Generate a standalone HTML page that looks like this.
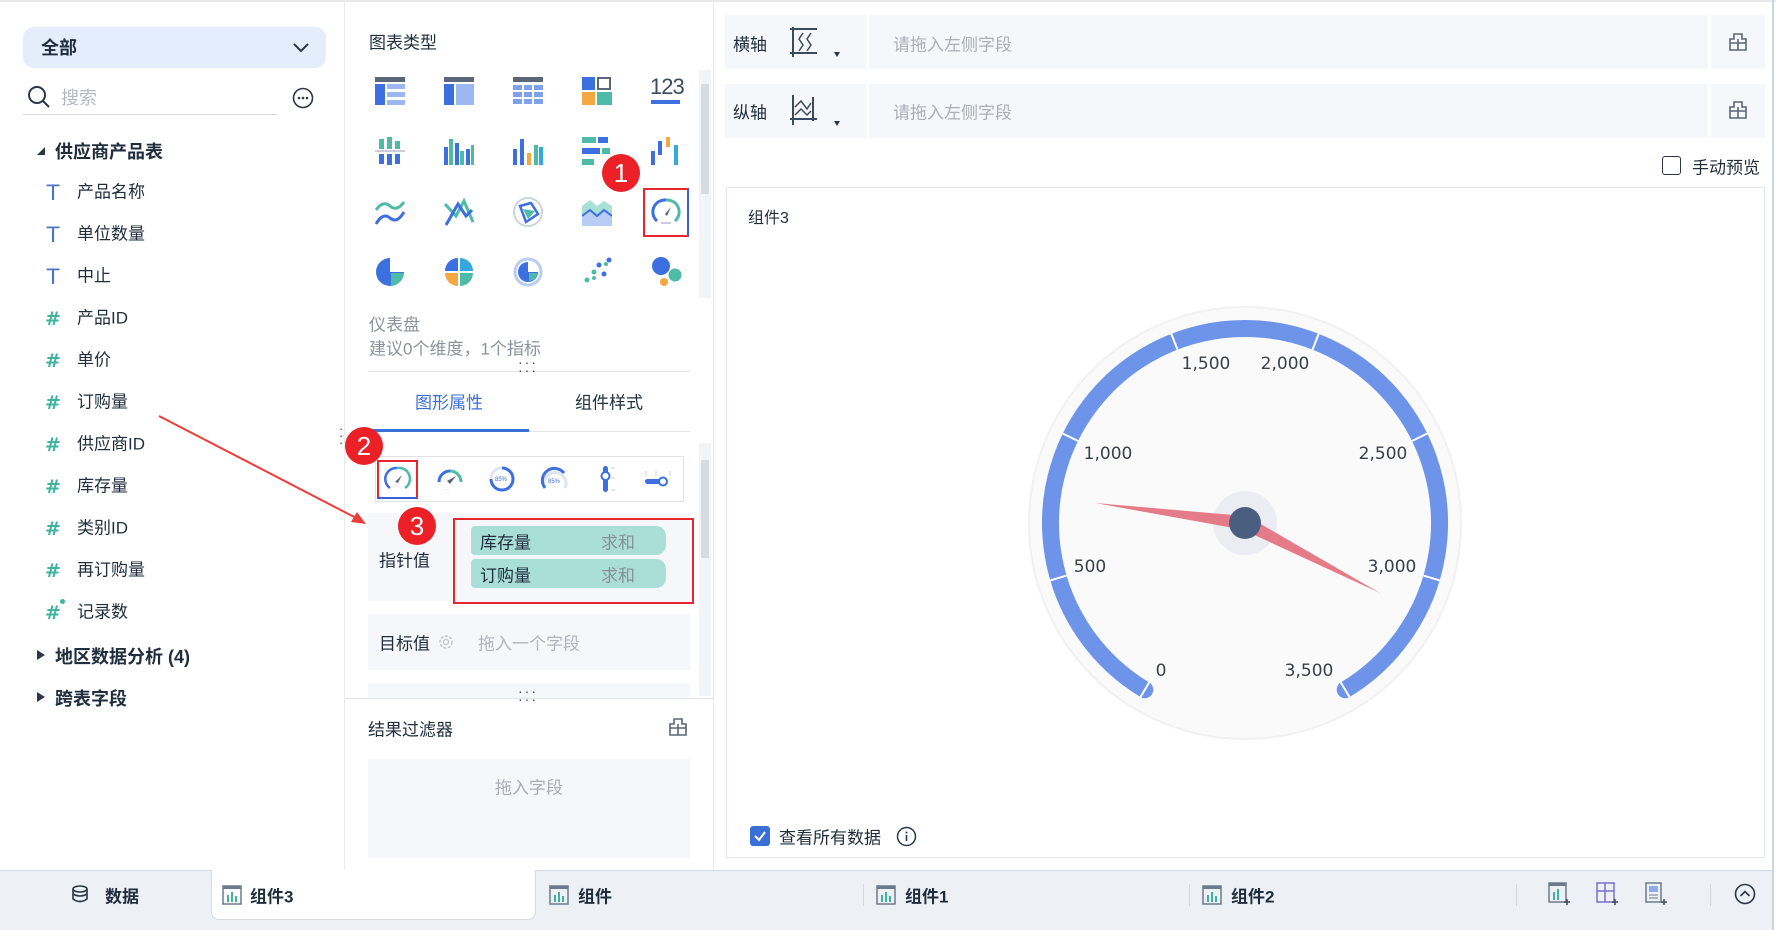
<!DOCTYPE html>
<html><head><meta charset="utf-8">
<style>
*{margin:0;padding:0;box-sizing:border-box}
body{width:1776px;height:930px;background:#fff;font-family:"Liberation Sans","Noto Sans CJK SC",sans-serif;color:#1f2d3d;position:relative;overflow:hidden;font-size:17px}
.a{position:absolute;white-space:nowrap}
.t{transform:translateY(-50%)}
.ti{color:#4d74c4;font-size:21px;font-weight:400;width:20px;text-align:center;margin-top:3px;font-family:"DejaVu Sans",sans-serif}
.hs{color:#3fb39f;font-size:19px;font-weight:700;width:20px;text-align:center;margin-top:3px;font-family:"DejaVu Sans",sans-serif}
.badge{position:absolute;width:38px;height:38px;border-radius:50%;background:#ec2027;color:#fff;font-size:26px;text-align:center;line-height:38px;font-weight:400}
.rbox{position:absolute;border:2px solid #e8262d}
.row{position:absolute;background:#f5f7fb}
.pill{position:absolute;left:471px;width:195px;height:29px;background:#aadfd7;border-radius:4px 10px 10px 4px}
.pill span{position:absolute;top:50%;transform:translateY(-50%)}
.gray{color:#9aa1ab}
.sep{position:absolute;width:1px;background:#d3d7de}
</style></head><body>
<div class="a" style="left:0;top:0;width:1776px;height:2px;background:#e8e9ec"></div>
<div class="a" style="left:1772px;top:0;width:2px;height:930px;background:#cfd3da"></div>
<div class="a" style="left:344px;top:2px;width:1px;height:868px;background:#e8eaee"></div>
<div class="a" style="left:713px;top:2px;width:1px;height:868px;background:#e8eaee"></div>

<div class="a" style="left:23px;top:27px;width:303px;height:41px;background:#e4edfc;border-radius:11px"></div>
<div class="a t" style="left:41px;top:47px;font-weight:700;font-size:18px">全部</div>
<svg class="a" style="left:292px;top:38px" width="18" height="18"><path d="M2 6 L9 13 L16 6" fill="none" stroke="#2b3648" stroke-width="2"/></svg>
<svg class="a" style="left:27px;top:85px" width="24" height="24"><circle cx="10" cy="10" r="8" fill="none" stroke="#2b3648" stroke-width="2"/><path d="M16 16 L22 22" stroke="#2b3648" stroke-width="2"/></svg>
<div class="a t gray" style="left:61px;top:97px;font-size:18px;color:#b5bac2">搜索</div>
<div class="a" style="left:23px;top:114px;width:254px;height:1px;background:#d6d9de"></div>
<svg class="a" style="left:292px;top:87px" width="22" height="22"><circle cx="11" cy="11" r="9.5" fill="none" stroke="#2b3648" stroke-width="1.6"/><circle cx="7" cy="11" r="1.3" fill="#2b3648"/><circle cx="11" cy="11" r="1.3" fill="#2b3648"/><circle cx="15" cy="11" r="1.3" fill="#2b3648"/></svg>

<svg class="a" style="left:36px;top:146px" width="10" height="10"><path d="M1 9 L9 9 L9 1Z" fill="#2b3648"/></svg>
<div class="a t" style="left:55px;top:151px;font-weight:700;font-size:18px">供应商产品表</div>

<div class="a t ti" style="left:43px;top:190px">T</div><div class="a t" style="left:77px;top:190px">产品名称</div>
<div class="a t ti" style="left:43px;top:232px">T</div><div class="a t" style="left:77px;top:232px">单位数量</div>
<div class="a t ti" style="left:43px;top:274px">T</div><div class="a t" style="left:77px;top:274px">中止</div>
<div class="a t hs" style="left:43px;top:316px">#</div><div class="a t" style="left:77px;top:316px">产品ID</div>
<div class="a t hs" style="left:43px;top:358px">#</div><div class="a t" style="left:77px;top:358px">单价</div>
<div class="a t hs" style="left:43px;top:400px">#</div><div class="a t" style="left:77px;top:400px">订购量</div>
<div class="a t hs" style="left:43px;top:442px">#</div><div class="a t" style="left:77px;top:442px">供应商ID</div>
<div class="a t hs" style="left:43px;top:484px">#</div><div class="a t" style="left:77px;top:484px">库存量</div>
<div class="a t hs" style="left:43px;top:526px">#</div><div class="a t" style="left:77px;top:526px">类别ID</div>
<div class="a t hs" style="left:43px;top:568px">#</div><div class="a t" style="left:77px;top:568px">再订购量</div>
<div class="a t hs" style="left:43px;top:610px">#</div><div class="a" style="left:60px;top:599px;width:5px;height:5px;border-radius:50%;background:#3fb39f"></div><div class="a t" style="left:77px;top:610px">记录数</div>

<svg class="a" style="left:36px;top:649px" width="10" height="12"><path d="M1 1 L9 6 L1 11Z" fill="#2b3648"/></svg>
<div class="a t" style="left:55px;top:656px;font-weight:700;font-size:18px">地区数据分析 (4)</div>
<svg class="a" style="left:36px;top:691px" width="10" height="12"><path d="M1 1 L9 6 L1 11Z" fill="#2b3648"/></svg>
<div class="a t" style="left:55px;top:698px;font-weight:700;font-size:18px">跨表字段</div>

<div class="a t" style="left:369px;top:41px">图表类型</div>
<div class="a" style="left:699px;top:70px;width:12px;height:228px;background:#f3f4f6"></div>
<div class="a" style="left:701px;top:84px;width:8px;height:110px;background:#d8dbe0"></div>

<svg class="a" style="left:375px;top:77px" width="30" height="28"><rect x="0" y="0" width="30" height="5" fill="#5b6679"/><rect x="0" y="7" width="10" height="21" fill="#3c6fe0"/><rect x="12" y="7" width="18" height="5" fill="#9db7f2"/><rect x="12" y="15" width="18" height="5" fill="#9db7f2"/><rect x="12" y="23" width="18" height="5" fill="#9db7f2"/></svg>
<svg class="a" style="left:444px;top:77px" width="30" height="28"><rect x="0" y="0" width="30" height="5" fill="#5b6679"/><rect x="0" y="7" width="10" height="21" fill="#3c6fe0"/><rect x="12" y="7" width="18" height="21" fill="#9db7f2"/></svg>
<svg class="a" style="left:513px;top:77px" width="30" height="28"><rect x="0" y="0" width="30" height="5" fill="#5b6679"/><g fill="#7fa2ee"><rect x="0" y="8" width="9" height="5"/><rect x="11" y="8" width="8" height="5"/><rect x="21" y="8" width="9" height="5"/><rect x="0" y="15" width="9" height="5"/><rect x="11" y="15" width="8" height="5"/><rect x="21" y="15" width="9" height="5"/><rect x="0" y="22" width="9" height="5"/><rect x="11" y="22" width="8" height="5"/><rect x="21" y="22" width="9" height="5"/></g></svg>
<svg class="a" style="left:582px;top:77px" width="30" height="28"><rect x="0" y="0" width="13" height="13" fill="#3c6fe0"/><rect x="16" y="1" width="12" height="11" fill="none" stroke="#5b6679" stroke-width="2"/><rect x="0" y="15" width="13" height="13" fill="#f5a742"/><rect x="15" y="15" width="15" height="13" fill="#4dbba8"/></svg>
<div class="a" style="left:650px;top:74px;font-size:22px;color:#3c4a60;letter-spacing:-1px">123</div>
<div class="a" style="left:651px;top:100px;width:29px;height:4px;background:#3c6fe0"></div>
<svg class="a" style="left:375px;top:137px" width="30" height="28"><g fill="#4dbba8"><rect x="4" y="2" width="5" height="10"/><rect x="12" y="0" width="5" height="12"/><rect x="20" y="4" width="5" height="8"/></g><rect x="0" y="13" width="30" height="2" fill="#ccd"/><g fill="#3c6fe0"><rect x="4" y="17" width="5" height="10"/><rect x="12" y="17" width="5" height="11"/><rect x="20" y="17" width="5" height="10"/></g></svg>
<svg class="a" style="left:444px;top:137px" width="30" height="28"><g fill="#3c6fe0"><rect x="0" y="10" width="4" height="18"/><rect x="11" y="6" width="4" height="22"/><rect x="22" y="12" width="4" height="16"/></g><g fill="#4dbba8"><rect x="5" y="2" width="4" height="26"/><rect x="16" y="14" width="4" height="14"/><rect x="27" y="8" width="3" height="20"/></g></svg>
<svg class="a" style="left:513px;top:137px" width="30" height="28"><rect x="0" y="12" width="4" height="16" fill="#3c6fe0"/><rect x="7" y="2" width="4" height="26" fill="#3c6fe0"/><rect x="14" y="16" width="4" height="12" fill="#f5a742"/><rect x="21" y="8" width="4" height="20" fill="#4dbba8"/><rect x="26" y="10" width="4" height="18" fill="#36a8e0"/></svg>
<svg class="a" style="left:582px;top:137px" width="30" height="28"><rect x="0" y="0" width="14" height="6" fill="#4dbba8"/><rect x="16" y="0" width="10" height="6" fill="#3c6fe0"/><rect x="0" y="11" width="18" height="6" fill="#3c6fe0"/><rect x="20" y="11" width="8" height="6" fill="#4dbba8"/><rect x="0" y="22" width="12" height="6" fill="#4dbba8"/></svg>
<svg class="a" style="left:651px;top:137px" width="30" height="28"><rect x="0" y="14" width="4" height="14" fill="#3c6fe0"/><rect x="7" y="4" width="4" height="14" fill="#3c6fe0"/><rect x="15" y="0" width="4" height="10" fill="#f5a742"/><rect x="23" y="8" width="4" height="20" fill="#36a8e0"/></svg>
<svg class="a" style="left:375px;top:198px" width="30" height="28"><path d="M1 12 Q8 2 15 8 T29 4" fill="none" stroke="#4dbba8" stroke-width="3"/><path d="M1 26 Q8 14 15 20 T29 14" fill="none" stroke="#3c6fe0" stroke-width="3"/></svg>
<svg class="a" style="left:444px;top:198px" width="30" height="28"><path d="M1 6 L12 18 L20 3 L29 24" fill="none" stroke="#4dbba8" stroke-width="3"/><path d="M2 27 L14 6 L22 18 L28 12" fill="none" stroke="#3c6fe0" stroke-width="3"/></svg>
<svg class="a" style="left:513px;top:197px" width="30" height="30"><circle cx="15" cy="15" r="14" fill="none" stroke="#ccd3df" stroke-width="2"/><path d="M7 9 L18 6 L25 17 L13 25Z" fill="none" stroke="#3c6fe0" stroke-width="2.5"/><path d="M10 12 L22 14 L15 22Z" fill="#4dbba8"/></svg>
<svg class="a" style="left:582px;top:198px" width="30" height="28"><path d="M0 8 L8 2 L15 8 L22 3 L30 8 L30 28 L0 28Z" fill="#a8e0d6"/><path d="M0 18 L8 12 L15 18 L22 12 L30 18 L30 28 L0 28Z" fill="#b8ccf5"/><path d="M0 18 L8 12 L15 18 L22 12 L30 18" fill="none" stroke="#3c6fe0" stroke-width="2"/></svg>
<svg class="a" style="left:650px;top:196px" width="32" height="32"><path d="M7 25 A12 12 0 0 1 16 4" fill="none" stroke="#3c6fe0" stroke-width="3"/><path d="M16 4 A12 12 0 0 1 25 25" fill="none" stroke="#4dbba8" stroke-width="3"/><path d="M15 18 L21 11 L17 20Z" fill="#5b6679"/><rect x="11" y="26" width="10" height="2" fill="#ccd"/></svg>
<svg class="a" style="left:375px;top:257px" width="30" height="30"><path d="M15 15 L15 1 A14 14 0 1 0 29 15Z" fill="#3c6fe0"/><path d="M16 16 L29 16 A14 14 0 0 1 16 29Z" fill="#4dbba8"/></svg>
<svg class="a" style="left:444px;top:257px" width="30" height="30"><path d="M14 14 L14 1 A13 13 0 0 0 1 14Z" fill="#3c6fe0"/><path d="M16 14 L16 1 A13 13 0 0 1 29 14Z" fill="#36a8e0"/><path d="M14 16 L1 16 A13 13 0 0 0 14 29Z" fill="#f5a742"/><path d="M16 16 L29 16 A13 13 0 0 1 16 29Z" fill="#4dbba8"/></svg>
<svg class="a" style="left:513px;top:257px" width="30" height="30"><circle cx="15" cy="15" r="13" fill="none" stroke="#b8ccf5" stroke-width="3"/><path d="M15 15 L15 5 A10 10 0 1 0 25 15Z" fill="#3c6fe0"/><path d="M16 16 L24 16 A8 8 0 0 1 16 24Z" fill="#4dbba8"/></svg>
<svg class="a" style="left:582px;top:257px" width="30" height="30"><g fill="#3c6fe0"><circle cx="27" cy="3" r="2.5"/><circle cx="17" cy="8" r="2.5"/><circle cx="22" cy="17" r="2.5"/></g><g fill="#4dbba8"><circle cx="24" cy="7" r="2"/><circle cx="12" cy="15" r="2.5"/><circle cx="5" cy="23" r="2.5"/><circle cx="12" cy="21" r="2"/></g></svg>
<svg class="a" style="left:650px;top:256px" width="32" height="32"><circle cx="11" cy="10" r="9" fill="#3c6fe0"/><circle cx="25" cy="19" r="6.5" fill="#4dbba8"/><circle cx="14" cy="26" r="4" fill="#f5a742"/></svg>

<div class="rbox" style="left:643px;top:188px;width:46px;height:49px;border-right-color:#3a5fd8"></div>
<div class="badge" style="left:602px;top:154px">1</div>

<div class="a t" style="left:369px;top:323px;color:#8c929b">仪表盘</div>
<div class="a t" style="left:369px;top:347px;color:#8c929b">建议0个维度，1个指标</div>
<div class="a" style="left:368px;top:371px;width:322px;height:1px;background:#e3e5ea"></div>
<div class="a" style="left:518px;top:358px;font-size:14px;letter-spacing:2px;color:#444;line-height:8px">···<br>···</div>

<div class="a t" style="left:449px;top:401px;transform:translate(-50%,-50%);color:#3a6fd8">图形属性</div>
<div class="a t" style="left:609px;top:401px;transform:translate(-50%,-50%)">组件样式</div>
<div class="a" style="left:368px;top:431px;width:322px;height:1px;background:#e3e5ea"></div>
<div class="a" style="left:368px;top:429px;width:161px;height:3px;background:#3a6fd8"></div>
<div class="a" style="left:339px;top:425px;font-size:13px;line-height:7px;color:#444">·<br>·<br>·</div>

<div class="a" style="left:699px;top:443px;width:12px;height:253px;background:#f3f4f6"></div>
<div class="a" style="left:701px;top:460px;width:8px;height:98px;background:#d8dbe0"></div>
<div class="a" style="left:375px;top:456px;width:309px;height:46px;border:1px solid #dfe2e8"></div>
<svg class="a" style="left:382px;top:464px" width="30" height="30"><path d="M8 24 A11 11 0 0 1 15 4" fill="none" stroke="#3c6fe0" stroke-width="2.5"/><path d="M15 4 A11 11 0 0 1 23 24" fill="none" stroke="#4dbba8" stroke-width="2.5"/><path d="M13 18 L20 11 L16 19Z" fill="#5b6679"/></svg>
<svg class="a" style="left:435px;top:466px" width="30" height="26"><path d="M4 16 A11 11 0 0 1 15 5" fill="none" stroke="#3c6fe0" stroke-width="3"/><path d="M15 5 A11 11 0 0 1 26 16" fill="none" stroke="#4dbba8" stroke-width="3"/><path d="M12 15 L21 10 L15 18Z" fill="#5b6679"/><text x="9" y="25" font-size="5" fill="#aaa">···</text></svg>
<svg class="a" style="left:487px;top:464px" width="30" height="30"><circle cx="15" cy="15" r="11" fill="none" stroke="#dfe5f3" stroke-width="3"/><path d="M15 4 A11 11 0 1 1 4 15" fill="none" stroke="#3c6fe0" stroke-width="3"/><text x="8" y="17" font-size="6" fill="#3c6fe0">85%</text></svg>
<svg class="a" style="left:540px;top:464px" width="30" height="30"><path d="M5 24 A11 11 0 1 1 25 24" fill="none" stroke="#dfe5f3" stroke-width="3"/><path d="M5 24 A11 11 0 0 1 24 9" fill="none" stroke="#3c6fe0" stroke-width="3"/><text x="8" y="19" font-size="6" fill="#3c6fe0">85%</text></svg>
<svg class="a" style="left:597px;top:464px" width="22" height="30"><rect x="6" y="2" width="5" height="26" rx="2.5" fill="#3c6fe0"/><circle cx="8.5" cy="12" r="4" fill="#fff" stroke="#3c6fe0" stroke-width="2"/><g stroke="#ccc"><line x1="14" y1="4" x2="18" y2="4"/><line x1="14" y1="14" x2="18" y2="14"/><line x1="14" y1="26" x2="18" y2="26"/></g></svg>
<svg class="a" style="left:643px;top:468px" width="30" height="22"><g stroke="#ccc"><line x1="3" y1="3" x2="3" y2="8"/><line x1="13" y1="3" x2="13" y2="8"/><line x1="27" y1="3" x2="27" y2="8"/></g><rect x="2" y="11" width="22" height="5" rx="2.5" fill="#3c6fe0"/><circle cx="20" cy="13.5" r="4" fill="#fff" stroke="#3c6fe0" stroke-width="2"/></svg>
<div class="rbox" style="left:377px;top:460px;width:41px;height:39px;border-bottom-color:#3a5fd8"></div>
<div class="badge" style="left:345px;top:427px">2</div>

<div class="row" style="left:368px;top:513px;width:322px;height:88px"></div>
<div class="a t" style="left:379px;top:559px">指针值</div>
<div class="pill" style="top:526px"><span style="left:9px">库存量</span><span class="gray" style="left:130px;color:#8a9098">求和</span></div>
<div class="pill" style="top:559px"><span style="left:9px">订购量</span><span class="gray" style="left:130px;color:#8a9098">求和</span></div>
<div class="rbox" style="left:453px;top:518px;width:241px;height:86px"></div>
<div class="badge" style="left:398px;top:507px">3</div>

<div class="row" style="left:368px;top:614px;width:322px;height:56px"></div>
<div class="a t" style="left:379px;top:642px">目标值</div>
<svg class="a" style="left:438px;top:634px" width="16" height="16"><circle cx="8" cy="8" r="6" fill="none" stroke="#c0c5cc" stroke-width="1.5" stroke-dasharray="3 1.5"/><circle cx="8" cy="8" r="2.5" fill="none" stroke="#c0c5cc" stroke-width="1.2"/></svg>
<div class="a t" style="left:478px;top:642px;color:#b0b5bd">拖入一个字段</div>
<div class="row" style="left:368px;top:683px;width:322px;height:15px"></div>
<div class="a" style="left:345px;top:698px;width:368px;height:1px;background:#e3e5ea"></div>
<div class="a" style="left:518px;top:687px;font-size:14px;letter-spacing:2px;color:#444;line-height:8px">···<br>···</div>

<div class="a t" style="left:368px;top:728px">结果过滤器</div>
<svg class="a" style="left:668px;top:717px" width="20" height="20"><path d="M6 2 H14 V7 H18 V18 H2 V7 H6Z M2 11 H18 M10 7 V18" fill="none" stroke="#5b6679" stroke-width="1.6"/></svg>
<div class="row" style="left:368px;top:759px;width:322px;height:99px"></div>
<div class="a t" style="left:529px;top:786px;transform:translate(-50%,-50%);color:#a8aeb6">拖入字段</div>

<div class="row" style="left:725px;top:15px;width:1040px;height:54px"></div>
<div class="a" style="left:866px;top:15px;width:3px;height:54px;background:#fff"></div>
<div class="a" style="left:1708px;top:15px;width:3px;height:54px;background:#fff"></div>
<div class="a t" style="left:733px;top:43px">横轴</div>
<svg class="a" style="left:789px;top:27px" width="32" height="30"><line x1="1" y1="2" x2="28" y2="2" stroke="#3c4a60" stroke-width="2"/><line x1="1" y1="26" x2="28" y2="26" stroke="#3c4a60" stroke-width="2"/><line x1="4" y1="0" x2="4" y2="30" stroke="#3c4a60" stroke-width="2"/><path d="M14 6 L10 12 L14 18 L10 24 M22 6 L18 12 L22 18 L18 24" fill="none" stroke="#3c4a60" stroke-width="1.5"/></svg>
<div class="a" style="left:834px;top:52px;border:3px solid transparent;border-top:5px solid #2b3648"></div>
<div class="a t" style="left:893px;top:43px;color:#aab0b8">请拖入左侧字段</div>
<svg class="a" style="left:1728px;top:32px" width="20" height="20"><path d="M6 2 H14 V7 H18 V18 H2 V7 H6Z M2 11 H18 M10 7 V18" fill="none" stroke="#5b6679" stroke-width="1.6"/></svg>

<div class="row" style="left:725px;top:84px;width:1040px;height:54px"></div>
<div class="a" style="left:866px;top:84px;width:3px;height:54px;background:#fff"></div>
<div class="a" style="left:1708px;top:84px;width:3px;height:54px;background:#fff"></div>
<div class="a t" style="left:733px;top:111px">纵轴</div>
<svg class="a" style="left:789px;top:95px" width="32" height="30"><line x1="1" y1="24" x2="28" y2="24" stroke="#3c4a60" stroke-width="2"/><line x1="4" y1="0" x2="4" y2="30" stroke="#3c4a60" stroke-width="2"/><line x1="24" y1="2" x2="24" y2="26" stroke="#3c4a60" stroke-width="2"/><path d="M6 12 L12 6 L18 14 L22 8 M6 20 L12 14 L18 20 L22 16" fill="none" stroke="#3c4a60" stroke-width="1.5"/></svg>
<div class="a" style="left:834px;top:121px;border:3px solid transparent;border-top:5px solid #2b3648"></div>
<div class="a t" style="left:893px;top:111px;color:#aab0b8">请拖入左侧字段</div>
<svg class="a" style="left:1728px;top:100px" width="20" height="20"><path d="M6 2 H14 V7 H18 V18 H2 V7 H6Z M2 11 H18 M10 7 V18" fill="none" stroke="#5b6679" stroke-width="1.6"/></svg>

<div class="a" style="left:1662px;top:156px;width:19px;height:19px;border:1.5px solid #2b3648;border-radius:3px"></div>
<div class="a t" style="left:1692px;top:166px">手动预览</div>

<div class="a" style="left:726px;top:187px;width:1039px;height:671px;border:1.5px solid #e4e7ec"></div>
<div class="a t" style="left:748px;top:216px;font-size:16px">组件3</div>

<svg class="a" style="left:0;top:0" width="1776" height="930">
<circle cx="1245" cy="523" r="216" fill="#fafafa" stroke="#f1f1f3" stroke-width="2"/>
<path d="M1144.8 689.7 A194.5 194.5 0 1 1 1345.2 689.7" fill="none" stroke="#6e94ea" stroke-width="17" stroke-linecap="round"/>
<g stroke="#fff" stroke-width="2">
<line x1="1149.2" y1="682.4" x2="1140.5" y2="697"/><line x1="1066.6" y1="575.6" x2="1050.3" y2="580.4"/><line x1="1078" y1="441" x2="1062.7" y2="433.5"/><line x1="1177.5" y1="349.6" x2="1171.3" y2="333.8"/><line x1="1312.5" y1="349.6" x2="1318.7" y2="333.8"/><line x1="1412" y1="441" x2="1427.3" y2="433.5"/><line x1="1423.4" y1="575.6" x2="1439.7" y2="580.4"/><line x1="1340.8" y1="682.4" x2="1349.5" y2="697"/>
</g>
<g font-family="DejaVu Sans, Liberation Sans, sans-serif" font-size="17" fill="#3a3f4a" text-anchor="middle">
<text x="1206" y="369">1,500</text><text x="1285" y="369">2,000</text>
<text x="1108" y="459">1,000</text><text x="1383" y="459">2,500</text>
<text x="1090" y="572">500</text><text x="1392" y="572">3,000</text>
<text x="1161" y="676">0</text><text x="1309" y="676">3,500</text>
</g>
<circle cx="1245" cy="523" r="32" fill="#ecedf3"/>
<polygon points="1095,503 1245.9,516.1 1244.1,529.9" fill="#e57b88"/>
<polygon points="1380,593 1241.8,529.2 1248.2,516.8" fill="#e57b88"/>
<circle cx="1245" cy="523" r="16" fill="#4a5e80"/>
<line x1="159" y1="416" x2="360" y2="520" stroke="#ef3b3b" stroke-width="2"/>
<polygon points="366,524 351,522 357,512" fill="#ef3b3b"/>
</svg>

<div class="a" style="left:750px;top:826px;width:20px;height:20px;background:#3a6fd8;border-radius:3px"></div>
<svg class="a" style="left:752px;top:828px" width="16" height="16"><path d="M3 8 L7 12 L13 4" fill="none" stroke="#fff" stroke-width="2"/></svg>
<div class="a t" style="left:779px;top:836px">查看所有数据</div>
<svg class="a" style="left:896px;top:826px" width="21" height="21"><circle cx="10.5" cy="10.5" r="9" fill="none" stroke="#2b3648" stroke-width="1.5"/><rect x="9.7" y="9" width="1.6" height="6" fill="#2b3648"/><circle cx="10.5" cy="6.5" r="1" fill="#2b3648"/></svg>

<div class="a" style="left:0;top:870px;width:1772px;height:60px;background:#edf0f5;border-top:1px solid #d3d7de"></div>
<div class="a" style="left:211px;top:870px;width:325px;height:50px;background:#fff;border:1px solid #d6dae0;border-top:none;border-radius:0 0 8px 8px"></div>
<svg class="a" style="left:70px;top:884px" width="20" height="20"><ellipse cx="10" cy="5" rx="7" ry="3" fill="none" stroke="#2b3648" stroke-width="1.6"/><path d="M3 5 V15 Q10 20 17 15 V5 M3 10 Q10 14 17 10" fill="none" stroke="#2b3648" stroke-width="1.6"/></svg>
<div class="a t" style="left:105px;top:895px;font-weight:700">数据</div>
<svg class="a" style="left:222px;top:885px" width="20" height="20"><rect x="1" y="1" width="18" height="18" fill="none" stroke="#6b7a8c" stroke-width="1.5"/><rect x="1" y="1" width="18" height="3" fill="#6b7a8c"/><g fill="#3fb39f"><rect x="5" y="10" width="2" height="7"/><rect x="9" y="7" width="2" height="10"/><rect x="13" y="11" width="2" height="6"/></g></svg>
<div class="a t" style="left:250px;top:895px;font-weight:700">组件3</div>
<svg class="a" style="left:549px;top:885px" width="20" height="20"><rect x="1" y="1" width="18" height="18" fill="none" stroke="#6b7a8c" stroke-width="1.5"/><rect x="1" y="1" width="18" height="3" fill="#6b7a8c"/><g fill="#3fb39f"><rect x="5" y="10" width="2" height="7"/><rect x="9" y="7" width="2" height="10"/><rect x="13" y="11" width="2" height="6"/></g></svg>
<div class="a t" style="left:578px;top:895px;font-weight:700">组件</div>
<div class="sep" style="left:863px;top:884px;height:22px"></div>
<svg class="a" style="left:876px;top:885px" width="20" height="20"><rect x="1" y="1" width="18" height="18" fill="none" stroke="#6b7a8c" stroke-width="1.5"/><rect x="1" y="1" width="18" height="3" fill="#6b7a8c"/><g fill="#3fb39f"><rect x="5" y="10" width="2" height="7"/><rect x="9" y="7" width="2" height="10"/><rect x="13" y="11" width="2" height="6"/></g></svg>
<div class="a t" style="left:905px;top:895px;font-weight:700">组件1</div>
<div class="sep" style="left:1189px;top:884px;height:22px"></div>
<svg class="a" style="left:1202px;top:885px" width="20" height="20"><rect x="1" y="1" width="18" height="18" fill="none" stroke="#6b7a8c" stroke-width="1.5"/><rect x="1" y="1" width="18" height="3" fill="#6b7a8c"/><g fill="#3fb39f"><rect x="5" y="10" width="2" height="7"/><rect x="9" y="7" width="2" height="10"/><rect x="13" y="11" width="2" height="6"/></g></svg>
<div class="a t" style="left:1231px;top:895px;font-weight:700">组件2</div>
<div class="sep" style="left:1516px;top:884px;height:22px"></div>
<svg class="a" style="left:1548px;top:882px" width="24" height="24"><rect x="1" y="1" width="17" height="19" fill="none" stroke="#6b7a8c" stroke-width="1.5"/><rect x="1" y="1" width="17" height="3" fill="#6b7a8c"/><g fill="#3fb39f"><rect x="5" y="10" width="2" height="8"/><rect x="9" y="7" width="2" height="11"/></g><path d="M19 17 V23 M16 20 H22" stroke="#3c4a60" stroke-width="1.5"/></svg>
<svg class="a" style="left:1596px;top:882px" width="24" height="24"><rect x="1" y="1" width="17" height="19" fill="none" stroke="#7d6fd1" stroke-width="1.5"/><path d="M1 9 H18 M9 1 V20" stroke="#7d6fd1" stroke-width="1.5"/><path d="M19 17 V23 M16 20 H22" stroke="#3c4a60" stroke-width="1.5"/></svg>
<svg class="a" style="left:1645px;top:882px" width="24" height="24"><rect x="1" y="1" width="15" height="19" fill="none" stroke="#6b7a8c" stroke-width="1.5"/><rect x="4" y="4" width="9" height="6" fill="#8faaf0"/><path d="M4 13 H13 M4 16 H13" stroke="#6b7a8c"/><path d="M19 17 V23 M16 20 H22" stroke="#3c4a60" stroke-width="1.5"/></svg>
<div class="sep" style="left:1710px;top:884px;height:22px"></div>
<svg class="a" style="left:1734px;top:883px" width="22" height="22"><circle cx="11" cy="11" r="9.5" fill="none" stroke="#2b3648" stroke-width="1.6"/><path d="M6.5 13 L11 8.5 L15.5 13" fill="none" stroke="#2b3648" stroke-width="1.6"/></svg>
</body></html>
